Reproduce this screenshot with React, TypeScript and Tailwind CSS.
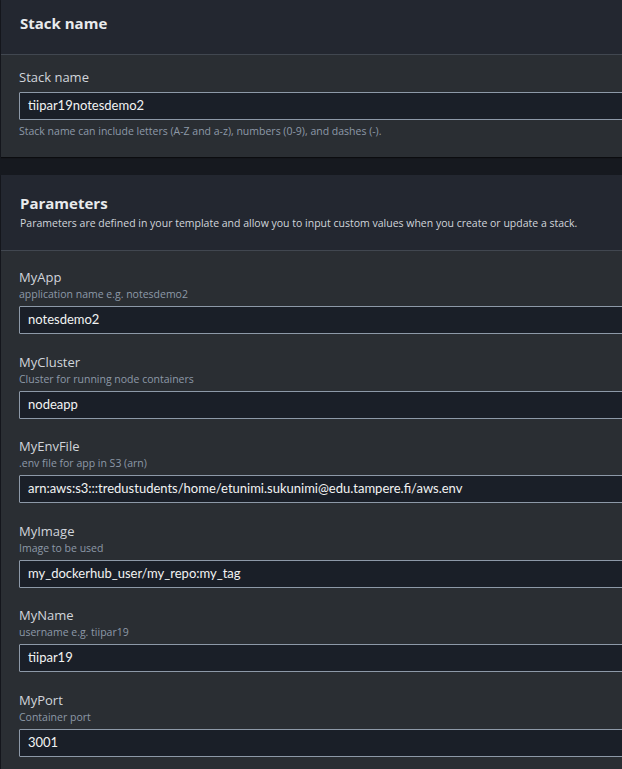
import React from 'react';

type Param = { name: string; hint: string; value: string };

const PARAMS: Param[] = [
  { name: 'MyApp', hint: 'application name e.g. notesdemo2', value: 'notesdemo2' },
  { name: 'MyCluster', hint: 'Cluster for running node containers', value: 'nodeapp' },
  { name: 'MyEnvFile', hint: '.env file for app in S3 (arn)', value: 'arn:aws:s3:::tredustudents/home/etunimi.sukunimi@edu.tampere.fi/aws.env' },
  { name: 'MyImage', hint: 'Image to be used', value: 'my_dockerhub_user/my_repo:my_tag' },
  { name: 'MyName', hint: 'username e.g. tiipar19', value: 'tiipar19' },
  { name: 'MyPort', hint: 'Container port', value: '3001' },
];

function TextInput({ value }: { value: string }) {
  return (
    <div
      className="h-[28px] border border-[#8d99a8] bg-[#1a1f28] rounded-[1px] px-[8px] flex items-center text-[13px] text-[#f2f3f3]"
      style={{ fontFamily: 'Lato, "Open Sans", sans-serif' }}
    >
      {value}
    </div>
  );
}

function App() {
  return (
    <div
      className="h-[769px] w-[622px] overflow-hidden bg-[#16191f]"
      style={{ fontFamily: '"Open Sans", "Noto Sans", sans-serif' }}
    >
      <div className="w-[700px] pl-[1px]">
        {/* Stack name panel */}
        <section className="bg-[#2a2e33] shadow-[0_1px_1px_rgba(0,0,0,0.5)]">
          <div className="h-[55px] bg-[#232730] border-b border-[#414750] px-[19px] pt-[13px]">
            <h2 className="text-[15px] font-bold text-[#e9ebed] leading-[20px]">Stack name</h2>
          </div>
          <div className="px-[18px] pt-[14px] pb-[19px]">
            <div className="text-[13px] text-[#d1d5db] leading-[16px] mb-[7px]">Stack name</div>
            <TextInput value="tiipar19notesdemo2" />
            <div className="text-[10.5px] text-[#8d99a8] leading-[14px] mt-[4px]">
              Stack name can include letters (A-Z and a-z), numbers (0-9), and dashes (-).
            </div>
          </div>
        </section>

        {/* Parameters panel */}
        <section className="mt-[18px] bg-[#2a2e33] shadow-[0_1px_1px_rgba(0,0,0,0.5)]">
          <div className="h-[76px] bg-[#232730] border-b border-[#414750] px-[19px] pt-[18px]">
            <h2 className="text-[15px] font-bold text-[#e9ebed] leading-[20px]">Parameters</h2>
            <p className="text-[10.5px] text-[#d1d5db] leading-[14px] mt-[3px]">
              Parameters are defined in your template and allow you to input custom values when you create or update a stack.
            </p>
          </div>
          <div className="px-[18px] pt-[18px] pb-[20px] flex flex-col gap-[19.5px]">
            {PARAMS.map(p => (
              <div key={p.name}>
                <div className="text-[13px] text-[#d1d5db] leading-[16px]">{p.name}</div>
                <div className="text-[10.5px] text-[#8d99a8] leading-[14px] mt-[2px] mb-[5px]">{p.hint}</div>
                <TextInput value={p.value} />
              </div>
            ))}
          </div>
        </section>
      </div>
    </div>
  );
}

export default App;
